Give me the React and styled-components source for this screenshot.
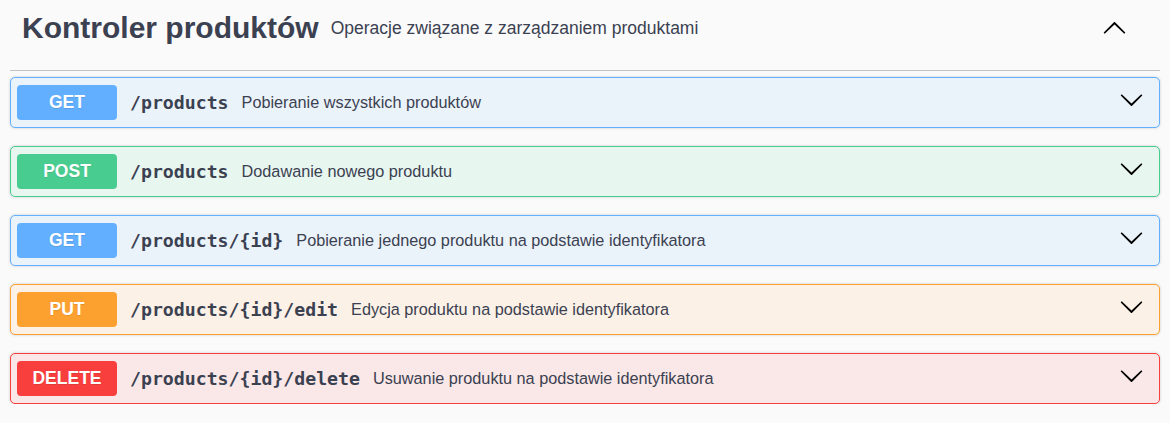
import React from 'react';
import styled, { createGlobalStyle } from 'styled-components';

const GlobalStyle = createGlobalStyle`
  html, body {
    margin: 0;
    padding: 0;
    background: #fafafa;
  }
  body {
    font-family: "Liberation Sans", Arial, sans-serif;
    color: #3b4151;
  }
`;

const methodColors = {
  GET: { border: '#61affe', bg: '#ebf3fa' },
  POST: { border: '#49cc90', bg: '#e8f6f0' },
  PUT: { border: '#fca130', bg: '#fbf1e6' },
  DELETE: { border: '#f93e3e', bg: '#fae7e7' },
};

const Section = styled.section`
  padding: 0 10px;
`;

const TagHeader = styled.div`
  display: flex;
  align-items: center;
  height: 56px;
  padding: 0 33px 14px 12px;
  border-bottom: 1px solid rgba(59, 65, 81, 0.3);
  margin-bottom: 6px;
`;

const TagTitle = styled.h3`
  margin: 0;
  font-size: 30px;
  font-weight: 700;
  color: #3b4151;
`;

const TagDescription = styled.small`
  flex: 1;
  margin-left: 12px;
  font-size: 17.5px;
  color: #3b4151;
`;

const Arrow = styled.svg`
  width: 25px;
  height: 25px;
  flex-shrink: 0;
  transform: ${p => (p.$up ? 'rotate(180deg)' : 'none')};
  margin: ${p => (p.$up ? '0' : '0 9px 6px 0')};
`;

const OpList = styled.div`
  display: flex;
  flex-direction: column;
  gap: 18px;
`;

const Opblock = styled.div`
  display: flex;
  align-items: center;
  height: 49px;
  padding: 0 6px;
  border: 1px solid ${p => methodColors[p.$method].border};
  background: ${p => methodColors[p.$method].bg};
  border-radius: 5px;
  box-shadow: 0 0 3px rgba(0, 0, 0, 0.19);
`;

const MethodBadge = styled.span`
  width: 100px;
  height: 35px;
  display: flex;
  align-items: center;
  justify-content: center;
  flex-shrink: 0;
  border-radius: 4px;
  background: ${p => methodColors[p.$method].border};
  color: #fff;
  font-size: 17.5px;
  font-weight: 700;
  text-shadow: 0 1px 0 rgba(0, 0, 0, 0.1);
`;

const Path = styled.span`
  margin-left: 13px;
  font-family: "DejaVu Sans Mono", "Liberation Mono", monospace;
  font-size: 18.2px;
  font-weight: 700;
  color: #3b4151;
`;

const OpDescription = styled.span`
  flex: 1;
  margin-left: 13px;
  font-size: 16.25px;
  color: #3b4151;
`;

const ArrowIcon = ({ up }) => (
  <Arrow $up={up} viewBox="0 0 20 20" aria-hidden="true">
    <path
      fill="#000"
      d="M17.418 6.109c.272-.268.709-.268.979 0s.271.701 0 .969l-7.908 7.83c-.27.268-.707.268-.979 0l-7.908-7.830c-.27-.268-.27-.701 0-.969.271-.268.709-.268.979 0L10 13.25l7.418-7.141z"
    />
  </Arrow>
);

const operations = [
  { method: 'GET', path: '/products', summary: 'Pobieranie wszystkich produktów' },
  { method: 'POST', path: '/products', summary: 'Dodawanie nowego produktu' },
  { method: 'GET', path: '/products/{id}', summary: 'Pobieranie jednego produktu na podstawie identyfikatora' },
  { method: 'PUT', path: '/products/{id}/edit', summary: 'Edycja produktu na podstawie identyfikatora' },
  { method: 'DELETE', path: '/products/{id}/delete', summary: 'Usuwanie produktu na podstawie identyfikatora' },
];

const App = () => (
  <>
    <GlobalStyle />
    <Section>
      <TagHeader>
        <TagTitle>Kontroler produktów</TagTitle>
        <TagDescription>Operacje związane z zarządzaniem produktami</TagDescription>
        <ArrowIcon up />
      </TagHeader>
      <OpList>
        {operations.map((op, i) => (
          <Opblock key={i} $method={op.method}>
            <MethodBadge $method={op.method}>{op.method}</MethodBadge>
            <Path>{op.path}</Path>
            <OpDescription>{op.summary}</OpDescription>
            <ArrowIcon />
          </Opblock>
        ))}
      </OpList>
    </Section>
  </>
);

export default App;
